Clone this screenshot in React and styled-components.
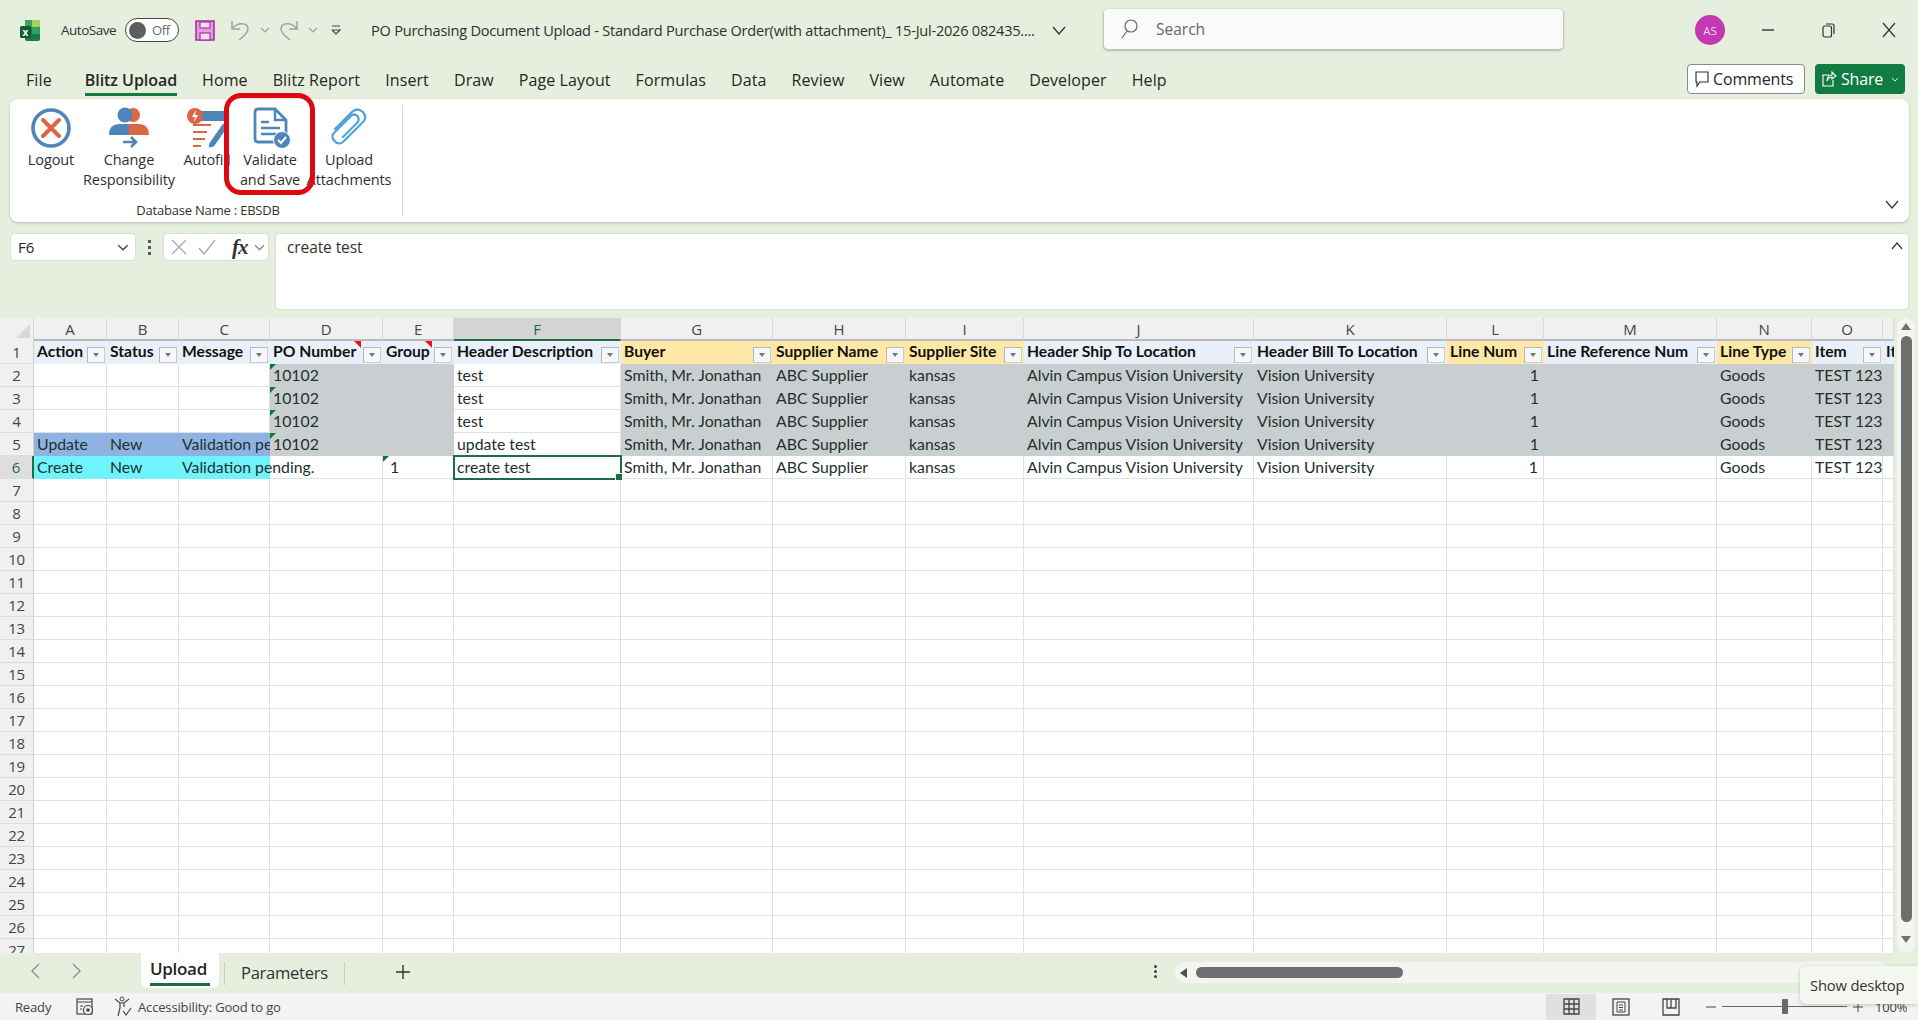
import React from 'react';
import styled, { createGlobalStyle } from 'styled-components';

const UI = '"Open Sans", "Noto Sans", sans-serif';
const CELL = 'Lato, "Noto Sans", sans-serif';

const Global = createGlobalStyle`
  html, body { margin: 0; padding: 0; width: 1918px; height: 1020px; overflow: hidden; background: #e6eedd; }
  * { box-sizing: border-box; }
`;

const Page = styled.div`
  width: 1918px; height: 1020px; display: flex; flex-direction: column;
  background: #e6eedd; font-family: ${UI}; color: #262626; overflow: hidden; position: relative;
`;

/* Title bar */
const TitleBar = styled.div`height: 58px; display: flex; align-items: center; flex: none; padding-top: 2px;`;
const Logo = styled.svg`width: 20px; height: 21px; margin-left: 20px; flex: none;`;
const AutoSaveLabel = styled.span`font-size: 13.5px; margin-left: 21px; width: 54px; white-space: nowrap; letter-spacing: -0.5px; color: #333;`;
const Toggle = styled.div`
  width: 54px; height: 24px; margin-left: 10px; border: 1.5px solid #444; border-radius: 12px; background: #fff;
  display: flex; align-items: center; padding-left: 3px; gap: 6px; font-size: 13px; color: #666; letter-spacing: -0.4px;
`;
const ToggleKnob = styled.span`width: 17px; height: 17px; border-radius: 50%; background: #5e5e5e; flex: none;`;
const QatIcon = styled.svg`flex: none; margin-left: ${p => p.$ml}px; width: ${p => p.$w}px; height: ${p => p.$h}px;`;
const DocTitle = styled.span`font-size: 14.6px; margin-left: 29px; width: 672px; white-space: nowrap; letter-spacing: -0.25px; color: #303030; overflow: hidden;`;
const SearchBox = styled.div`
  margin-left: 38px; width: 459px; height: 40px; background: #fafafa; border-radius: 4px;
  box-shadow: 0 1px 2px 1px rgba(0,0,0,.2); display: flex; align-items: center; padding-left: 16px; gap: 18px;
  font-size: 15.5px; color: #666; margin-top: -2px;
`;
const Avatar = styled.div`
  margin-left: 132px; width: 30px; height: 30px; border-radius: 50%; background: #c239b3; color: #f5d5f0;
  font-size: 11.5px; display: flex; align-items: center; justify-content: center; flex: none;
`;

/* Tabs */
const TabBar = styled.div`height: 41px; flex: none; display: flex; align-items: flex-start; padding: 7px 13px 0 26px;`;
const Tabs = styled.div`display: flex; gap: 25px; flex: 1;`;
const Tab = styled.div`
  font-size: 16px; height: 31px; line-height: 30px; white-space: nowrap; letter-spacing: ${p => p.$active ? '-0.05px' : '0.1px'};
  font-weight: ${p => p.$active ? 600 : 400}; color: #262626; margin-left: ${p => p.$active ? 8 : 0}px;
  border-bottom: ${p => p.$active ? '3px solid #107c41' : '3px solid transparent'};
`;
const CommentsBtn = styled.div`
  width: 118px; height: 30px; margin: -1px 10px 0 0; background: #fff; border: 1px solid #8a8a8a; border-radius: 4px;
  display: flex; align-items: center; gap: 3px; padding-left: 6px; font-size: 16px; letter-spacing: -0.15px;
`;
const ShareBtn = styled.div`
  width: 90px; height: 30px; margin-top: -1px; background: #107c41; color: #fff; border-radius: 4px;
  display: flex; align-items: center; gap: 4px; padding-left: 6px; font-size: 16px; letter-spacing: -0.2px;
`;

/* Ribbon */
const Ribbon = styled.div`
  height: 123px; margin: 0 9px 0 10px; background: #fff; border-radius: 8px; flex: none; position: relative;
  box-shadow: 0 1px 3px rgba(0,0,0,.2); display: flex; padding: 6px 0 6px 12px;
`;
const RibbonGroup = styled.div`display: flex; flex-direction: column; width: 381px; border-right: 1px solid #d6d6d6;`;
const RibbonItems = styled.div`display: flex; flex: 1;`;
const RibbonItem = styled.div`
  width: ${p => p.$w}px; flex: none; display: flex; flex-direction: column; align-items: center;
  font-size: 14.5px; line-height: 20px; letter-spacing: -0.1px; color: #303030; text-align: center; white-space: nowrap;
`;
const RibbonIcon = styled.svg`width: 44px; height: 44px; flex: none; margin-bottom: 1px;`;
const GroupLabel = styled.div`font-size: 13px; text-align: center; letter-spacing: -0.2px; line-height: 18px; color: #333; padding-right: 8px; margin-bottom: -3px;`;
const Highlight = styled.div`
  position: absolute; left: 214px; top: -6px; width: 91px; height: 102px; border: 5px solid #dd0a12; border-radius: 17px; pointer-events: none;
`;
const RibbonChevron = styled.svg`position: absolute; right: 10px; bottom: 12px; width: 14px; height: 10px;`;

/* Formula */
const FormulaRow = styled.div`height: 77px; margin: 11px 9px 8px 10px; flex: none; display: flex; align-items: flex-start;`;
const NameBox = styled.div`
  width: 126px; height: 28px; background: #fff; border: 1px solid #dcdcdc; border-radius: 5px; display: flex; align-items: center;
  justify-content: space-between; padding: 0 6px 0 7px; font-size: 15px;
`;
const Dots = styled.div`width: 27px; display: flex; flex-direction: column; align-items: center; gap: 3px; padding-top: 7px;`;
const Dot = styled.span`width: 3px; height: 3px; background: #555;`;
const FxBox = styled.div`
  width: 106px; height: 28px; background: #fff; border: 1px solid #dcdcdc; border-radius: 5px; display: flex; align-items: center;
  padding-left: 7px; gap: 11px; color: #333;
`;
const FxLabel = styled.i`font-family: "Liberation Serif", serif; font-size: 21px; font-weight: 700; margin-left: 5px; margin-right: -5px; letter-spacing: -1px;`;
const FormulaInput = styled.div`
  flex: 1; height: 77px; margin-left: 6px; background: #fff; border: 1px solid #dcdcdc; border-radius: 5px; padding: 2px 0 0 11px;
  font-size: 15.5px; letter-spacing: -0.1px; line-height: 22px; display: flex; justify-content: space-between; color: #333;
`;

/* Sheet */
const Sheet = styled.div`height: 635px; flex: none; display: flex;`;
const Grid = styled.div`width: 1894px; height: 635px; overflow: hidden; background: #fff; font-family: ${CELL}; flex: none;`;
const Row = styled.div`display: flex; height: ${p => p.$h}px;`;
const Corner = styled.div`
  width: 34px; height: 23px; flex: none; background: #f0f0f0; border-right: 1px solid #d8d8d8; position: relative;
  &::after { content: ''; position: absolute; right: 3px; bottom: 3px; border-left: 14px solid transparent; border-bottom: 14px solid #d8d8d8; }
`;
const ColHead = styled.div`
  width: ${p => p.$w}px; flex: none; height: 23px; line-height: 22px; text-align: center; font-size: 15px; overflow: hidden;
  font-family: ${UI}; letter-spacing: -0.2px;
  background: ${p => p.$sel ? '#d4d4d4' : '#f0f0f0'}; color: ${p => p.$sel ? '#1e6b45' : '#444'};
  border-right: 1px solid #d8d8d8; border-bottom: 2px solid ${p => p.$sel ? '#1e6b45' : '#b8bcc0'};
`;
const RowHead = styled.div`
  width: 34px; flex: none; text-align: center; font-size: 15px; line-height: 22px; font-family: ${UI}; letter-spacing: -0.3px;
  background: ${p => p.$sel ? '#dedede' : '#f0f0f0'}; color: ${p => p.$sel ? '#1e6b45' : '#444'};
  border-right: ${p => p.$sel ? '2px solid #1e6b45' : '1px solid #d0d0d0'}; border-bottom: 1px solid #dcdcdc;
`;
const Cell = styled.div`
  width: ${p => p.$w}px; flex: none; height: 100%; position: relative; font-size: 15.8px; line-height: 22px; padding: 0 3px; white-space: nowrap;
  background: ${p => p.$fill || 'transparent'}; color: #22302c;
  text-align: ${p => p.$right ? 'right' : 'left'};
  ${p => p.$right ? 'padding-right: 5px;' : ''}
  overflow: ${p => p.$clip ? 'hidden' : 'visible'};
  border-right: ${p => p.$fill ? 'none' : '1px solid #e0e0e0'};
  border-bottom: ${p => p.$fill ? 'none' : '1px solid #e0e0e0'};
`;
const HeadCell = styled.div`
  width: ${p => p.$w}px; flex: none; height: 100%; position: relative; font-size: 15.7px; font-weight: 700; line-height: 21px; padding: 0 3px;
  white-space: nowrap; overflow: hidden; color: #111;
  background: ${p => p.$req ? '#ffe8a6' : '#eaf0f9'};
`;
const FilterBtn = styled.span`
  position: absolute; right: 2px; bottom: 1px; width: 18px; height: 16px; background: #f5f7fa; border: 1px solid #b4b8bc;
  border-right-color: #c8ccd0; border-bottom-color: #c8ccd0;
  &::after { content: ''; position: absolute; left: 5px; top: 5px; border: 3.5px solid transparent; border-top: 4px solid #777; border-bottom: none; }
`;
const RedMark = styled.span`
  position: absolute; right: 22px; top: 0; border-top: 7px solid #f01010; border-left: 7px solid transparent;
`;
const GreenMark = styled.span`
  position: absolute; left: 0; top: 0; border-top: 6px solid #0c7a2a; border-right: 6px solid transparent;
`;
const Active = styled.span`
  position: absolute; left: -1px; top: -1px; right: -2px; bottom: -2px; border: 2px solid #1e6b45; z-index: 2;
  &::after { content: ''; position: absolute; right: -3px; bottom: -3px; width: 6px; height: 6px; background: #1e6b45; border: 1px solid #fff; }
`;

const VScroll = styled.div`
  width: 24px; height: 635px; flex: none; padding: 0 3px 0 3px; display: flex; flex-direction: column; align-items: center;
`;
const VTrack = styled.div`flex: 1; width: 18px; background: #f4f5f2; border-radius: 9px; display: flex; flex-direction: column; align-items: center; padding-top: 5px;`;
const ArrowUp = styled.span`width: 0; height: 0; border: 5.5px solid transparent; border-bottom: 7px solid #707070; border-top: none; flex: none;`;
const ArrowDown = styled.span`width: 0; height: 0; border: 5.5px solid transparent; border-top: 7px solid #707070; border-bottom: none; flex: none;`;
const VThumb = styled.div`width: 11px; height: 586px; border-radius: 6px; background: #6e6e6e; margin: 6px 0 14px; flex: none;`;

/* Sheet tabs */
const SheetBar = styled.div`height: 40px; flex: none; display: flex; align-items: flex-start; position: relative;`;
const NavArrows = styled.div`width: 141px; height: 36px; display: flex; align-items: center; padding-left: 30px; gap: 32px;`;
const ActiveSheet = styled.div`
  width: 78px; height: 35px; background: #fff; border-radius: 0 0 6px 6px; padding: 1px 9px 0; font-size: 17px; font-weight: 600;
  letter-spacing: -0.3px; line-height: 29px; color: #262626; display: flex; flex-direction: column;
`;
const ActiveLine = styled.span`height: 3px; background: #1e6b45; flex: none; margin-top: 0;`;
const SheetSep = styled.span`width: 1px; height: 23px; background: #c8cfc0; margin-top: 9px; flex: none; margin-left: ${p => p.$ml}px;`;
const SheetTab = styled.div`font-size: 16.6px; letter-spacing: -0.3px; margin-left: 16px; margin-right: 16px; line-height: 40px; color: #333; white-space: nowrap;`;
const PlusBtn = styled.svg`width: 16px; height: 16px; margin: 11px 0 0 50px; flex: none;`;
const MoreDots = styled.div`margin-left: 743px; padding-top: 12px; display: flex; flex-direction: column; gap: 2px; flex: none; width: 3px;`;
const MoreDot = styled.span`width: 3px; height: 3px; background: #444; border-radius: 50%;`;
const HScroll = styled.div`
  margin: 9px 0 0 18px; width: 714px; height: 21px; background: #f4f5f2; border-radius: 10px; display: flex; align-items: center; padding-left: 5px; flex: none;
`;
const ArrowLeft = styled.span`width: 0; height: 0; border: 5.5px solid transparent; border-right: 7px solid #505050; border-left: none; flex: none;`;
const HThumb = styled.div`width: 207px; height: 11px; border-radius: 6px; background: #6e6e6e; margin-left: 9px;`;

/* Status */
const Status = styled.div`
  height: 27px; flex: none; background: #f3f3f3; display: flex; align-items: center; font-size: 13px; color: #444; padding-left: 15px; position: relative; letter-spacing: -0.15px;
`;
const StatusIcon = styled.svg`width: ${p => p.$s}px; height: ${p => p.$s}px; flex: none; margin-left: ${p => p.$ml}px;`;
const ViewBtn = styled.div`
  width: 50px; height: 26px; display: flex; align-items: center; justify-content: center; background: ${p => p.$on ? '#e0e0e0' : 'transparent'}; flex: none;
`;
const ZoomLine = styled.div`width: 125px; height: 1px; background: #666; position: relative; margin: 0 6px; flex: none;`;
const ZoomThumb = styled.span`position: absolute; left: 60px; top: -7px; width: 6px; height: 15px; background: #6a6a6a; border-radius: 1px;`;
const Tooltip = styled.div`
  position: absolute; right: 0; bottom: 16px; width: 118px; height: 38px; background: #f4f7f0; border-radius: 6px 0 0 6px;
  box-shadow: 0 1px 4px rgba(0,0,0,.2); font-size: 14.8px; line-height: 38px; padding-left: 10px; color: #333; letter-spacing: -0.2px; font-family: ${UI};
`;

const cols = [['A',73],['B',72],['C',91],['D',113],['E',71],['F',167],['G',152],['H',133],['I',118],['J',230],['K',193],['L',97],['M',173],['N',95],['O',71],['',11]];
const headers = [
  ['Action',0],['Status',0],['Message',0],['PO Number',0],['Group',0],['Header Description',0],['Buyer',1],['Supplier Name',1],['Supplier Site',1],
  ['Header Ship To Location',0],['Header Bill To Location',0],['Line Num',1],['Line Reference Num',0],['Line Type',1],['Item',0],['It',0],
];
const GRAY = '#c9cfd1';
const shared = ['Smith, Mr. Jonathan','ABC Supplier','kansas','Alvin Campus Vision University','Vision University','1','','Goods','TEST 123',''];

const rowData = (n) => {
  const sel = n === 6;
  const gray = n >= 2 && n <= 5 ? GRAY : undefined;
  const left = n === 5 ? ['Update','New','Validation pending.'] : n === 6 ? ['Create','New','Validation pending.'] : ['','',''];
  const leftFill = n === 5 ? '#8eb3e2' : n === 6 ? '#6ff3ff' : undefined;
  const desc = { 2:'test', 3:'test', 4:'test', 5:'update test', 6:'create test' }[n];
  return { sel, gray, left, leftFill, desc };
};

const GridRow = ({ n }) => {
  const { sel, gray, left, leftFill, desc } = rowData(n);
  if (n > 6) {
    return (
      <Row $h={23}>
        <RowHead>{n}</RowHead>
        {cols.map(([l, w]) => <Cell key={l} $w={w} />)}
      </Row>
    );
  }
  return (
    <Row $h={23}>
      <RowHead $sel={sel}>{n}</RowHead>
      <Cell $w={73} $fill={leftFill}>{left[0]}</Cell>
      <Cell $w={72} $fill={leftFill}>{left[1]}</Cell>
      <Cell $w={91} $fill={leftFill} $clip={n === 5}>{left[2]}</Cell>
      <Cell $w={113} $fill={gray}>{n < 6 && <GreenMark />}{n < 6 ? '10102' : ''}</Cell>
      <Cell $w={71} $fill={gray}>{n === 6 && <GreenMark />}{n === 6 ? <>&nbsp;1</> : ''}</Cell>
      <Cell $w={167}>{sel && <Active />}{desc}</Cell>
      {shared.map((t, i) => (
        <Cell key={i} $w={cols[i + 6][1]} $fill={gray} $right={t === '1'} $clip>{t}</Cell>
      ))}
    </Row>
  );
};

const LogoutIcon = () => (
  <RibbonIcon viewBox="0 0 44 44">
    <circle cx="22" cy="23" r="18" fill="none" stroke="#4f86b9" strokeWidth="3.6" />
    <path d="M14 15 L30 31 M30 15 L14 31" stroke="#dc6644" strokeWidth="4" strokeLinecap="round" />
  </RibbonIcon>
);
const ChangeIcon = () => (
  <RibbonIcon viewBox="0 0 44 44">
    <circle cx="26" cy="10" r="7" fill="#dc6644" />
    <circle cx="18" cy="10" r="7.5" fill="#4f86b9" />
    <path d="M2 30 Q2 19 13 19 H22 V30 Z" fill="#4f86b9" />
    <path d="M22 19 H31 Q42 19 42 30 H22 Z" fill="#dc6644" />
    <path d="M16 37 H29 M24 32 L29 37 L24 42" stroke="#4f86b9" strokeWidth="2.6" fill="none" />
  </RibbonIcon>
);
const AutofillIcon = () => (
  <RibbonIcon viewBox="0 0 44 44">
    <rect x="10" y="6" width="32" height="10" fill="#4f86b9" />
    <circle cx="10" cy="11" r="8" fill="#dc6644" />
    <path d="M11 5 L7 12 H10 L9 17 L13 10 H10 Z" fill="#fff" />
    <path d="M8 22 H26 M8 29 H22 M8 36 H20 M8 43 H16" stroke="#dc6644" strokeWidth="2" transform="translate(0 -2)" />
    <path d="M24 38 L38 18 L43 22 L29 42 L23 43 Z" fill="#4f86b9" stroke="#fff" strokeWidth="1" />
  </RibbonIcon>
);
const ValidateIcon = () => (
  <RibbonIcon viewBox="0 0 44 44">
    <path d="M7 7 Q7 4 10 4 H27 L38 15 V34 Q38 37 35 37 H10 Q7 37 7 34 Z" fill="#fff" stroke="#4f86b9" strokeWidth="2.8" />
    <path d="M27 4 V15 H38" fill="none" stroke="#4f86b9" strokeWidth="2.4" />
    <path d="M13 17 H21 M13 23 H32 M13 29 H28" stroke="#4f86b9" strokeWidth="2.4" />
    <circle cx="34" cy="35" r="8.5" fill="#4f86b9" stroke="#fff" strokeWidth="1" />
    <path d="M30 35 L33 38 L38 32" fill="none" stroke="#fff" strokeWidth="2" />
  </RibbonIcon>
);
const ClipIcon = () => (
  <RibbonIcon viewBox="0 0 44 44">
    <path d="M8 24 L25 7 Q30 2 36 7 Q41 13 35 18 L17 36 Q12 41 7.500 36 Q3 31 8 27 L24 11 Q27 8 30.500 11 Q33 15 30 18 L16 32" fill="none" stroke="#4ea3dc" strokeWidth="2.2" strokeLinecap="round" />
  </RibbonIcon>
);

const Chev = ({ w = 10, c = '#555', h = 6 }) => (
  <svg width={w} height={h} viewBox="0 0 10 6" style={{ flex: 'none' }}><path d="M1 1 L5 5 L9 1" fill="none" stroke={c} strokeWidth="1.200" /></svg>
);

export default function App() {
  const rows = [];
  for (let n = 2; n <= 27; n++) rows.push(<GridRow key={n} n={n} />);
  return (
    <Page>
      <Global />
      <TitleBar>
        <Logo viewBox="0 0 20 21">
          <rect x="5" y="0" width="15" height="21" rx="2" fill="#1a7a45" />
          <rect x="10" y="0" width="10" height="7" rx="1.500" fill="#a3d65c" />
          <rect x="5" y="0" width="7" height="7" fill="#3ea465" />
          <rect x="12" y="7" width="8" height="7" fill="#33a060" />
          <rect x="0" y="6" width="11" height="12" rx="1.500" fill="#0f5c33" />
          <text x="5.500" y="15.500" fontSize="10" fontWeight="700" fill="#fff" textAnchor="middle" fontFamily="Open Sans">x</text>
        </Logo>
        <AutoSaveLabel>AutoSave</AutoSaveLabel>
        <Toggle><ToggleKnob />Off</Toggle>
        <QatIcon $ml={16} $w={20} $h={21} viewBox="0 0 20 21">
          <path d="M1 1 H19 V20 H1 Z" fill="#e59be3" stroke="#a3359f" strokeWidth="1.600" />
          <rect x="5" y="2" width="10" height="6" fill="#f8dcf6" stroke="#a3359f" strokeWidth="1.200" />
          <rect x="5" y="13" width="10" height="7" fill="#f8dcf6" stroke="#a3359f" strokeWidth="1.200" />
        </QatIcon>
        <QatIcon $ml={15} $w={21} $h={22} viewBox="0 0 21 22">
          <path d="M2 2 V10 H10 M2 10 C7 3 18 3 18 10 C18 14 13 18 9 21" fill="none" stroke="#a2a2a2" strokeWidth="1.500" />
        </QatIcon>
        <QatIcon $ml={9} $w={10} $h={6} viewBox="0 0 10 6"><path d="M1 1 L5 5 L9 1" fill="none" stroke="#a2a2a2" strokeWidth="1.200" /></QatIcon>
        <QatIcon $ml={8} $w={21} $h={22} viewBox="0 0 21 22">
          <path d="M19 2 V10 H11 M19 10 C14 3 3 3 3 10 C3 14 8 18 12 21" fill="none" stroke="#a2a2a2" strokeWidth="1.500" />
        </QatIcon>
        <QatIcon $ml={9} $w={10} $h={6} viewBox="0 0 10 6"><path d="M1 1 L5 5 L9 1" fill="none" stroke="#a2a2a2" strokeWidth="1.200" /></QatIcon>
        <QatIcon $ml={12} $w={12} $h={12} viewBox="0 0 12 12"><path d="M2 2 H10 M2 6 H10 L6 10 L2 6" fill="none" stroke="#444" strokeWidth="1.200" /></QatIcon>
        <DocTitle>PO Purchasing Document Upload - Standard Purchase Order(with attachment)_ 15-Jul-2026 082435....</DocTitle>
        <QatIcon $ml={9} $w={14} $h={9} viewBox="0 0 14 9"><path d="M1 1 L7 8 L13 1" fill="none" stroke="#333" strokeWidth="1.300" /></QatIcon>
        <SearchBox>
          <svg width="18" height="22" viewBox="0 0 18 22" style={{ flex: 'none' }}><circle cx="11" cy="8" r="6" fill="none" stroke="#666" strokeWidth="1.200" /><path d="M7 13 L2 20" stroke="#666" strokeWidth="1.200" /></svg>
          Search
        </SearchBox>
        <Avatar>AS</Avatar>
        <QatIcon $ml={37} $w={12} $h={2} viewBox="0 0 12 2"><path d="M0 1 H12" stroke="#333" strokeWidth="1.400" /></QatIcon>
        <QatIcon $ml={48} $w={13} $h={15} viewBox="0 0 13 15"><rect x="1" y="3" width="8.500" height="11" rx="2" fill="none" stroke="#333" strokeWidth="1.200" /><path d="M4 1 H10 Q12 1 12 3 V11" fill="none" stroke="#333" strokeWidth="1.200" /></QatIcon>
        <QatIcon $ml={47} $w={14} $h={16} viewBox="0 0 14 16"><path d="M1 1 L13 15 M13 1 L1 15" stroke="#333" strokeWidth="1.200" /></QatIcon>
      </TitleBar>

      <TabBar>
        <Tabs>
          {['File','Blitz Upload','Home','Blitz Report','Insert','Draw','Page Layout','Formulas','Data','Review','View','Automate','Developer','Help'].map(t => (
            <Tab key={t} $active={t === 'Blitz Upload'}>{t}</Tab>
          ))}
        </Tabs>
        <CommentsBtn>
          <svg width="16" height="18" viewBox="0 0 16 18" style={{ flex: 'none' }}><path d="M2 2 H14 V12 H6 L3 16 V12 H2 Z" fill="none" stroke="#333" strokeWidth="1.200" /></svg>
          Comments
        </CommentsBtn>
        <ShareBtn>
          <svg width="16" height="18" viewBox="0 0 16 18" style={{ flex: 'none' }}><path d="M8 5 H2 V16 H12 V10 M6 11 Q6 5 11 5 V2 L15 6 L11 9 V7 Q8 7 6 11" fill="none" stroke="#fff" strokeWidth="1.100" /></svg>
          Share
          <span style={{ marginLeft: 4, display: 'flex' }}><Chev w={8} h={5} c="#fff" /></span>
        </ShareBtn>
      </TabBar>

      <Ribbon>
        <RibbonGroup>
          <RibbonItems>
            <RibbonItem $w={58}><LogoutIcon />Logout</RibbonItem>
            <RibbonItem $w={98}><ChangeIcon />Change<br />Responsibility</RibbonItem>
            <RibbonItem $w={58}><AutofillIcon />Autofill</RibbonItem>
            <RibbonItem $w={68}><ValidateIcon />Validate<br />and Save</RibbonItem>
            <RibbonItem $w={90}><ClipIcon />Upload<br />Attachments</RibbonItem>
          </RibbonItems>
          <GroupLabel>Database Name : EBSDB</GroupLabel>
        </RibbonGroup>
        <Highlight />
        <RibbonChevron viewBox="0 0 14 10"><path d="M1 1 L7 8 L13 1" fill="none" stroke="#333" strokeWidth="1.200" /></RibbonChevron>
      </Ribbon>

      <FormulaRow>
        <NameBox>F6<Chev w={12} h={7} c="#444" /></NameBox>
        <Dots><Dot /><Dot /><Dot /></Dots>
        <FxBox>
          <svg width="16" height="16" viewBox="0 0 16 16" style={{ flex: 'none' }}><path d="M1 1 L15 15 M15 1 L1 15" stroke="#a8a8a8" strokeWidth="1.300" /></svg>
          <svg width="18" height="16" viewBox="0 0 18 16" style={{ flex: 'none' }}><path d="M1 9 L6 15 L17 1" fill="none" stroke="#a8a8a8" strokeWidth="1.300" /></svg>
          <FxLabel>fx</FxLabel>
          <Chev w={11} h={7} c="#888" />
        </FxBox>
        <FormulaInput>
          <span>create test</span>
          <svg width="12" height="8" viewBox="0 0 12 8" style={{ margin: '6px 5px 0 0', flex: 'none' }}><path d="M1 7 L6 1 L11 7" fill="none" stroke="#333" strokeWidth="1.200" /></svg>
        </FormulaInput>
      </FormulaRow>

      <Sheet>
        <Grid>
          <Row $h={23}>
            <Corner />
            {cols.map(([l, w]) => <ColHead key={l || 'p'} $w={w} $sel={l === 'F'}>{l}</ColHead>)}
          </Row>
          <Row $h={23}>
            <RowHead>1</RowHead>
            {headers.map(([t, req], i) => (
              <HeadCell key={t} $w={cols[i][1]} $req={req}>
                {t}
                {i < 15 && <FilterBtn />}
                {(i === 3 || i === 4) && <RedMark />}
              </HeadCell>
            ))}
          </Row>
          {rows}
        </Grid>
        <VScroll>
          <VTrack>
            <ArrowUp />
            <VThumb />
            <ArrowDown />
          </VTrack>
        </VScroll>
      </Sheet>

      <SheetBar>
        <NavArrows>
          <svg width="10" height="16" viewBox="0 0 10 16"><path d="M9 1 L2 8 L9 15" fill="none" stroke="#8a8a8a" strokeWidth="1.300" /></svg>
          <svg width="10" height="16" viewBox="0 0 10 16"><path d="M1 1 L8 8 L1 15" fill="none" stroke="#8a8a8a" strokeWidth="1.300" /></svg>
        </NavArrows>
        <ActiveSheet>Upload<ActiveLine /></ActiveSheet>
        <SheetSep $ml={5} />
        <SheetTab>Parameters</SheetTab>
        <SheetSep $ml={0} />
        <PlusBtn viewBox="0 0 16 16"><path d="M8 1 V15 M1 8 H15" stroke="#333" strokeWidth="1.400" /></PlusBtn>
        <MoreDots><MoreDot /><MoreDot /><MoreDot /></MoreDots>
        <HScroll><ArrowLeft /><HThumb /></HScroll>
      </SheetBar>

      <Status>
        <span style={{ width: 36 }}>Ready</span>
        <StatusIcon $s={20} $ml={24} viewBox="0 0 20 20">
          <rect x="2" y="2" width="15" height="15" fill="none" stroke="#444" strokeWidth="1.200" />
          <path d="M2 5 H17 M5 9 H8 M5 12 H7" stroke="#444" strokeWidth="1.200" />
          <circle cx="13" cy="13" r="4.500" fill="#f3f3f3" stroke="#444" strokeWidth="1.200" />
          <circle cx="13" cy="13" r="1.800" fill="#444" />
        </StatusIcon>
        <StatusIcon $s={21} $ml={19} viewBox="0 0 21 21">
          <circle cx="8" cy="3" r="2" fill="none" stroke="#444" />
          <path d="M1 3 L6 7 H10 L15 3 M6 7 V12 L4 20 M10 7 V11 M17 12 L12 19 L9 15" fill="none" stroke="#444" strokeWidth="1.200" />
        </StatusIcon>
        <span style={{ marginLeft: 3, width: 1408, whiteSpace: 'nowrap' }}>Accessibility: Good to go</span>
        <ViewBtn $on>
          <svg width="17" height="17" viewBox="0 0 17 17"><path d="M1 1 H16 V16 H1 Z M6 1 V16 M11 1 V16 M1 6 H16 M1 11 H16" fill="none" stroke="#444" strokeWidth="1.300" /></svg>
        </ViewBtn>
        <ViewBtn>
          <svg width="18" height="18" viewBox="0 0 18 18"><rect x="1" y="1" width="16" height="16" fill="none" stroke="#444" strokeWidth="1.300" /><path d="M5 4 H13 V14 H5 Z M7 7 H11 M7 9.500 H11 M7 12 H11" fill="none" stroke="#444" /></svg>
        </ViewBtn>
        <ViewBtn>
          <svg width="18" height="18" viewBox="0 0 18 18"><path d="M1 1 H17 V17 H1 Z M5 1 V10 H14 V1 M9 1 V10" fill="none" stroke="#444" strokeWidth="1.300" /></svg>
        </ViewBtn>
        <svg width="10" height="2" viewBox="0 0 10 2" style={{ marginLeft: 10, flex: 'none' }}><path d="M0 1 H10" stroke="#444" /></svg>
        <ZoomLine><ZoomThumb /></ZoomLine>
        <svg width="10" height="10" viewBox="0 0 10 10" style={{ flex: 'none' }}><path d="M0 5 H10 M5 0 V10" stroke="#444" /></svg>
        <span style={{ marginLeft: 12, whiteSpace: 'nowrap' }}>100%</span>
        <Tooltip>Show desktop</Tooltip>
      </Status>
    </Page>
  );
}
